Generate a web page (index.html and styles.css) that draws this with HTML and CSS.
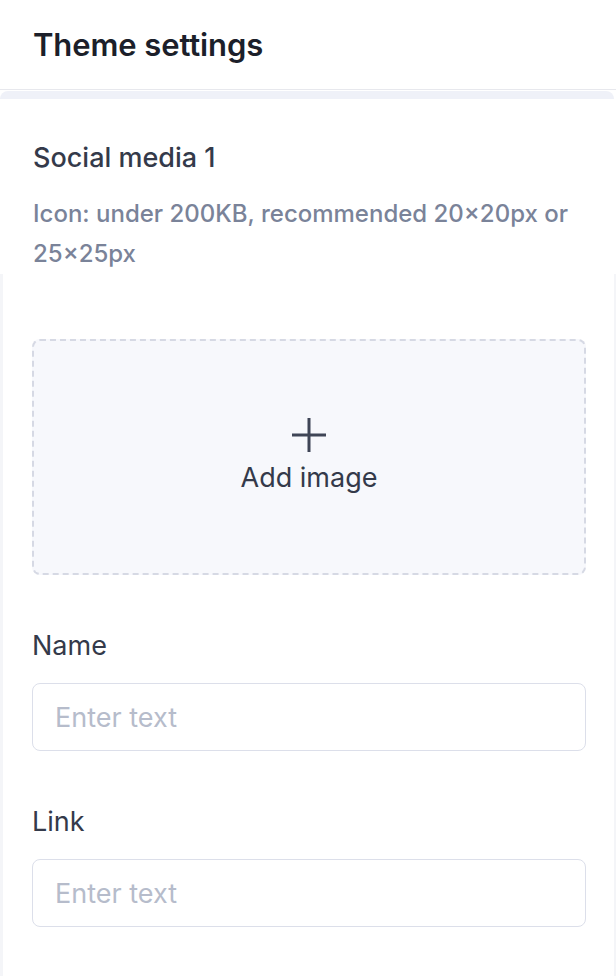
FILE: index.html
```html
<!DOCTYPE html>
<html>
<head>
<meta charset="utf-8">
<link rel="stylesheet" href="styles.css">
</head>
<body>
<div class="page">
  <header class="header"><h1 class="title">Theme settings</h1></header>
  <div class="band"></div>
  <section class="intro">
    <h2 class="section-title">Social media 1</h2>
    <p class="hint">Icon: under 200KB, recommended 20×20px or 25×25px</p>
  </section>
  <section class="form">
    <div class="upload">
      <svg class="plus" width="36" height="36" viewBox="0 0 36 36"><path d="M18 1v34M1 18h34" stroke="#3f4556" stroke-width="3" fill="none"/></svg>
      <span class="upload-label">Add image</span>
    </div>
    <div class="field">
      <label class="label">Name</label>
      <div class="input"><span class="placeholder">Enter text</span></div>
    </div>
    <div class="field">
      <label class="label">Link</label>
      <div class="input"><span class="placeholder">Enter text</span></div>
    </div>
  </section>
</div>
</body>
</html>
```
FILE: styles.css
```css
html, body { margin: 0; padding: 0; background: #ffffff; }
body { font-family: Inter, "Noto Sans", sans-serif; color: #343a4a; }
.page { width: 616px; height: 976px; overflow: hidden; }
.header { border-bottom: 1px solid #e7e8ed; display: flex; align-items: center; padding-left: 33px; box-sizing: border-box; height: 90px; }
.title { margin: 0; font-size: 31px; font-weight: 600; color: #1c1f2a; letter-spacing: -0.1px; }
.band { margin: 1px 2px 0 0; height: 8px; background: #eff1f8; border-radius: 8px 8px 0 0; }
.intro { padding: 0 33px; }
.section-title { margin: 42px 0 0; font-size: 27px; font-weight: 500; line-height: 34px; color: #343a4a; }
.hint { margin: 19px 0 0; font-size: 24px; line-height: 40px; font-weight: 500; color: #7a8399; }
.form { border-left: 3px solid #f4f5f8; border-right: 2px solid #f4f5f8; padding: 65px 28px 0 29px; margin-top: 0; height: 720px; display: flex; flex-direction: column; }
.upload { height: 236px; box-sizing: border-box; border: 2px dashed #d6d9e4; border-radius: 8px; background: #f7f8fc; display: flex; flex-direction: column; align-items: center; justify-content: center; gap: 8px; padding-bottom: 4px; }
.upload-label { font-size: 27px; line-height: 33px; color: #343a4a; }
.field { margin-top: 56px; display: flex; flex-direction: column; }
.label { font-size: 27px; line-height: 30px; color: #343a4a; }
.input { margin-top: 22px; height: 68px; box-sizing: border-box; border: 1px solid #dcdfea; border-radius: 8px; display: flex; align-items: center; padding-left: 22px; background: #fff; }
.placeholder { font-size: 27px; color: #b6bccb; }
```
